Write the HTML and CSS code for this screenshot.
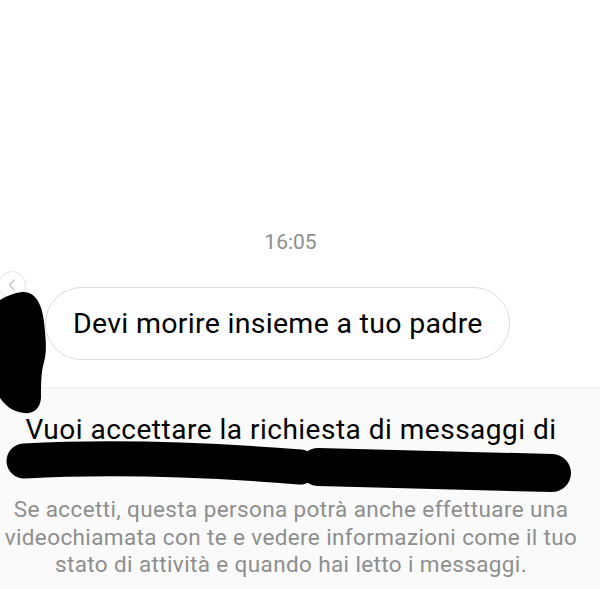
FILE: index.html
```html
<!DOCTYPE html>
<html lang="it">
<head>
<meta charset="utf-8">
<link rel="stylesheet" href="styles.css">
</head>
<body>
<div class="screen">
  <section class="chat">
    <div class="time">16:05</div>
    <div class="row">
      <div class="bubble">Devi morire insieme a tuo padre</div>
    </div>
  </section>
  <section class="panel">
    <h1 class="title">Vuoi accettare la richiesta di messaggi di<br><span class="name">nomeutente nascosto è nomeutente?</span></h1>
    <p class="note">Se accetti, questa persona potrà anche effettuare una<br>videochiamata con te e vedere informazioni come il tuo<br>stato di attività e quando hai letto i messaggi.</p>
  </section>

  <div class="back">
    <svg width="10" height="12" viewBox="0 0 10 12"><path d="M7 1 L2.5 6 L7 11" fill="none" stroke="#c8c8c8" stroke-width="1.6" stroke-linecap="round" stroke-linejoin="round"/></svg>
  </div>

  <svg class="scribble" width="600" height="589" viewBox="0 0 600 589">
    <path d="M22 292 C34 291 42 302 44 322 C46 340 47 352 44 362 C41 372 41 385 41 398 C40 410 32 414 24 413 C12 412 4 404 0 398 L0 300 C6 296 14 293 22 292 Z" fill="#000"/>
    <path d="M24 461 C100 457 200 459 300 467" fill="none" stroke="#000" stroke-width="35" stroke-linecap="round"/>
    <path d="M318 467 C420 469 500 471 552 473" fill="none" stroke="#000" stroke-width="38" stroke-linecap="round"/>
  </svg>
</div>
</body>
</html>
```

FILE: styles.css
```css
* { box-sizing: border-box; }
html, body { margin: 0; padding: 0; }
body {
  width: 600px;
  height: 589px;
  overflow: hidden;
  background: #fff;
  font-family: Roboto, "Liberation Sans", sans-serif;
}
.screen {
  position: relative;
  width: 600px;
  height: 589px;
  display: flex;
  flex-direction: column;
}
.chat {
  height: 387px;
  display: flex;
  flex-direction: column;
  justify-content: flex-end;
  padding-bottom: 27px;
}
.time {
  text-align: center;
  color: #8e8e8e;
  font-size: 21px;
  line-height: 24px;
  margin-right: 19px;
  margin-bottom: 33px;
}
.row {
  padding-left: 45px;
  display: flex;
}
.bubble {
  border: 1.5px solid #dbdbdb;
  border-radius: 37px;
  height: 73px;
  padding: 0 26px 0 27px;
  display: flex;
  align-items: center;
  font-size: 28.5px;
  letter-spacing: 0.3px;
  color: #000;
  white-space: nowrap;
}
.panel {
  flex: 1;
  background: #fafafa;
  border-top: 1px solid #eeeeee;
  text-align: center;
  padding: 24px 18px 0 0;
}
.title {
  margin: 0;
  font-weight: 400;
  font-size: 28px;
  letter-spacing: 0.5px;
  line-height: 36px;
  color: #000;
  white-space: nowrap;
}
.name {
  color: #000;
}
.note {
  margin: 12px 0 0;
  font-size: 22.5px;
  letter-spacing: 0.38px;
  line-height: 27.5px;
  color: #8e8e8e;
  white-space: nowrap;
}
.back {
  position: absolute;
  left: -2px;
  top: 271px;
  width: 28px;
  height: 28px;
  border-radius: 50%;
  border: 1.5px solid #e6e6e6;
  background: #fff;
  display: flex;
  align-items: center;
  justify-content: center;
}
.scribble {
  position: absolute;
  left: 0;
  top: 0;
  pointer-events: none;
}
```
